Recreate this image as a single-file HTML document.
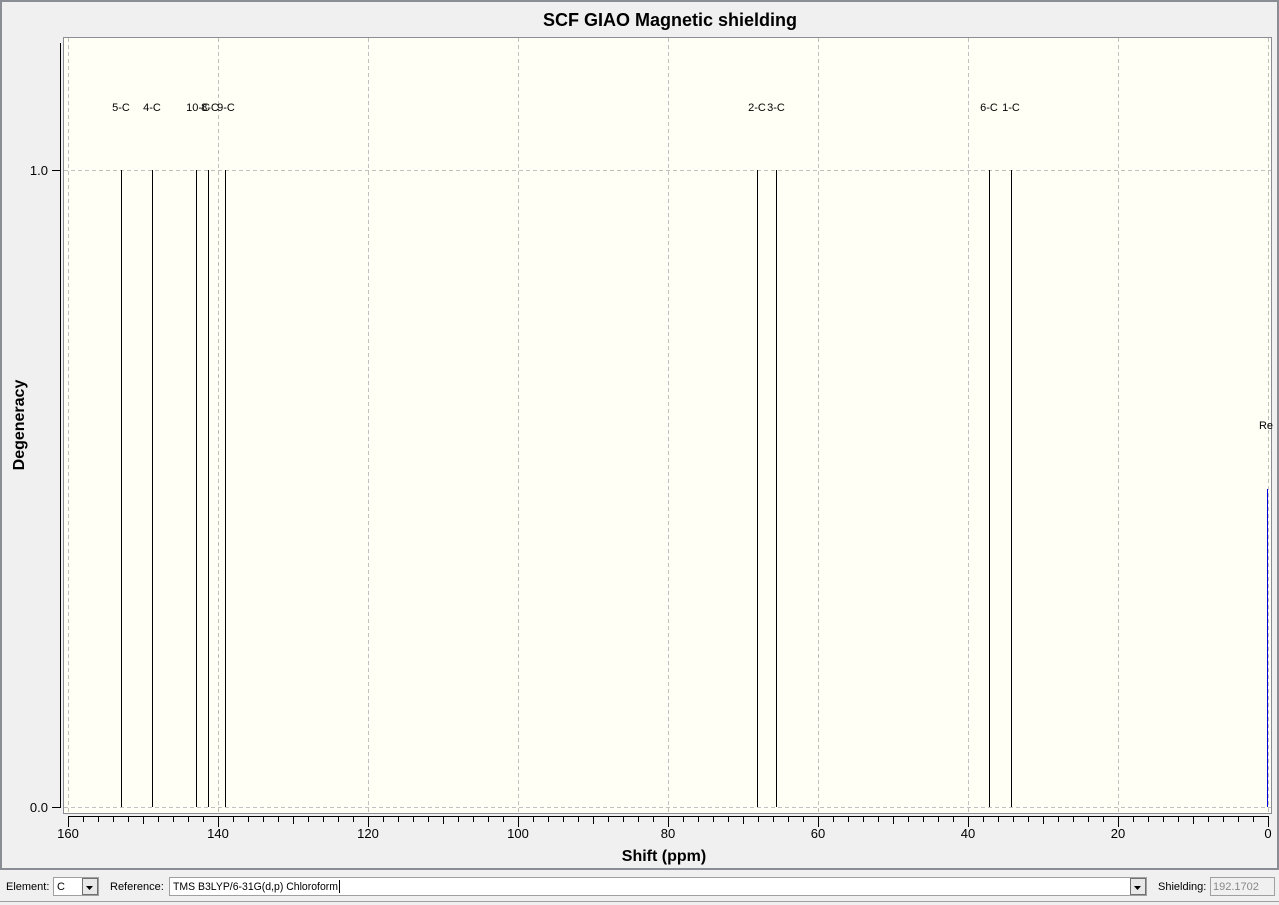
<!DOCTYPE html>
<html><head><style>
html,body{margin:0;padding:0;background:#f0f0f0;width:1279px;height:905px;overflow:hidden;font-family:"Liberation Sans",Arial,sans-serif}
</style></head><body>
<svg width="1279" height="905" xmlns="http://www.w3.org/2000/svg" font-family="Liberation Sans, Arial, sans-serif">
<rect x="0" y="0" width="1279" height="905" fill="#f0f0f0"/>
<rect x="1" y="1" width="1277" height="868" fill="#f0f0f0" stroke="#8a8d93" stroke-width="2"/>
<text x="670" y="26" font-size="18" font-weight="bold" text-anchor="middle" fill="#000">SCF GIAO Magnetic shielding</text>
<rect x="63.5" y="37.5" width="1208" height="776" fill="#fffff6" stroke="#8a8d93" stroke-width="1"/>
<g stroke="#c0c0c0" stroke-dasharray="4,3" stroke-width="1">
<line x1="68.5" y1="38" x2="68.5" y2="813"/><line x1="218.5" y1="38" x2="218.5" y2="813"/><line x1="368.5" y1="38" x2="368.5" y2="813"/><line x1="518.5" y1="38" x2="518.5" y2="813"/><line x1="668.5" y1="38" x2="668.5" y2="813"/><line x1="818.5" y1="38" x2="818.5" y2="813"/><line x1="968.5" y1="38" x2="968.5" y2="813"/><line x1="1118.5" y1="38" x2="1118.5" y2="813"/><line x1="1268.5" y1="38" x2="1268.5" y2="813"/>
<line x1="64" y1="170.5" x2="1271" y2="170.5"/><line x1="64" y1="807.5" x2="1271" y2="807.5"/>
</g>
<g stroke="#000" stroke-width="1">
<line x1="60.5" y1="43" x2="60.5" y2="808"/>
<line x1="52" y1="170.5" x2="60" y2="170.5"/><line x1="52" y1="807.5" x2="60" y2="807.5"/>
<line x1="68" y1="816.5" x2="1269" y2="816.5"/>
<line x1="121.5" y1="170" x2="121.5" y2="807"/><line x1="152.5" y1="170" x2="152.5" y2="807"/><line x1="196.5" y1="170" x2="196.5" y2="807"/><line x1="208.5" y1="170" x2="208.5" y2="807"/><line x1="225.5" y1="170" x2="225.5" y2="807"/><line x1="757.5" y1="170" x2="757.5" y2="807"/><line x1="776.5" y1="170" x2="776.5" y2="807"/><line x1="989.5" y1="170" x2="989.5" y2="807"/><line x1="1011.5" y1="170" x2="1011.5" y2="807"/>
</g>
<line x1="1267.5" y1="489" x2="1267.5" y2="807" stroke="#0000dd" stroke-width="1"/>
<g id="ticks" stroke="#000" stroke-width="1"></g>
<g font-size="11" fill="#000" text-anchor="middle">
<text x="121" y="111">5-C</text><text x="152" y="111">4-C</text><text x="198" y="111">10-C</text><text x="210" y="111">8-C</text><text x="226" y="111">9-C</text>
<text x="757" y="111">2-C</text><text x="776" y="111">3-C</text><text x="989" y="111">6-C</text><text x="1011" y="111">1-C</text>
<text x="1266" y="429">Re</text>
</g>
<g font-size="13" fill="#000" text-anchor="end"><text x="48" y="175">1.0</text><text x="48" y="812">0.0</text></g>
<g font-size="13" fill="#000" text-anchor="middle">
<text x="68" y="838">160</text><text x="218" y="838">140</text><text x="368" y="838">120</text><text x="518" y="838">100</text><text x="668" y="838">80</text><text x="818" y="838">60</text><text x="968" y="838">40</text><text x="1118" y="838">20</text><text x="1268" y="838">0</text>
</g>
<text x="664" y="861" font-size="16" font-weight="bold" text-anchor="middle">Shift (ppm)</text>
<text transform="translate(24,425) rotate(-90)" font-size="16" font-weight="bold" text-anchor="middle">Degeneracy</text>
<line x1="0" y1="901.5" x2="1279" y2="901.5" stroke="#a0a0a0"/>
<g font-size="11" fill="#000">
<text x="6" y="890">Element:</text>
<rect x="53.5" y="877.5" width="45" height="18" fill="#fff" stroke="#a0a0a0"/>
<text x="57" y="890">C</text>
<rect x="82.5" y="878.5" width="15" height="16" fill="#e8e8e8" stroke="#707070"/>
<path d="M86 886 h7 l-3.5 4z" fill="#000"/>
<text x="110" y="890">Reference:</text>
<rect x="169.5" y="877.5" width="977" height="18" fill="#fff" stroke="#a0a0a0"/>
<text x="173" y="890" textLength="165" lengthAdjust="spacingAndGlyphs">TMS B3LYP/6-31G(d,p) Chloroform</text>
<line x1="339.5" y1="880" x2="339.5" y2="893" stroke="#000"/>
<rect x="1130.5" y="878.5" width="15" height="16" fill="#e8e8e8" stroke="#707070"/>
<path d="M1134 886 h7 l-3.5 4z" fill="#000"/>
<text x="1158" y="890">Shielding:</text>
<rect x="1210.5" y="877.5" width="64" height="18" fill="#f0f0f0" stroke="#a0a0a0"/>
<text x="1213" y="890" fill="#888">192.1702</text>
</g>
</svg>
<script>
var g=document.getElementById('ticks'),s='';
for(var i=0;i<=80;i++){var x=68.5+i*15;var y2=(i%10==0)?827:((i%5==0)?824:822);s+='<line x1="'+x+'" y1="816" x2="'+x+'" y2="'+y2+'"/>';}
g.innerHTML=s;
</script>
</body></html>
